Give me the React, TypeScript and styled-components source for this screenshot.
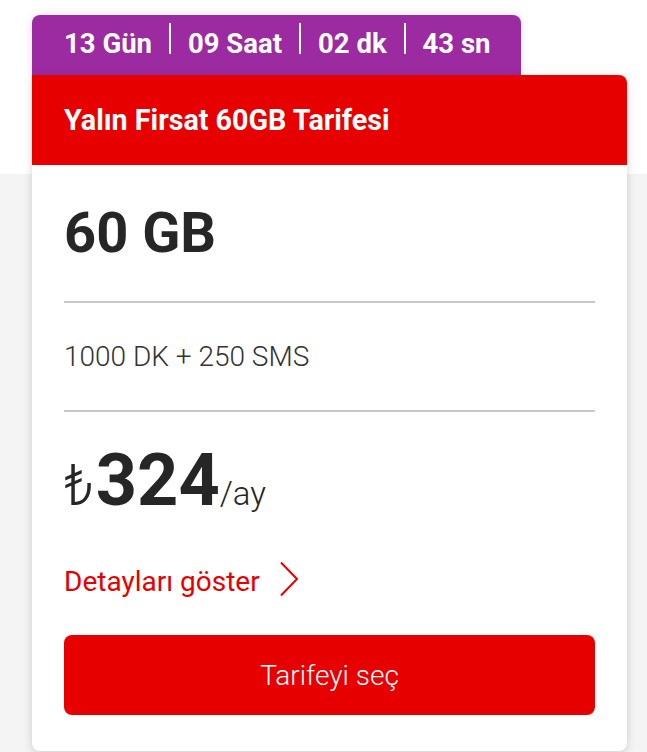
import styled, { createGlobalStyle } from "styled-components";

const GlobalStyle = createGlobalStyle`
  html, body {
    margin: 0;
    padding: 0;
  }
  body {
    font-family: Roboto, "Noto Sans", "Liberation Sans", sans-serif;
    color: #333333;
  }
`;

const Page = styled.main`
  min-height: 752px;
  padding: 15px 20px 0 32px;
  background: linear-gradient(#ffffff 174px, #f4f4f4 174px);
  box-sizing: border-box;
`;

const Offer = styled.section`
  width: 595px;
  display: flex;
  flex-direction: column;
  align-items: flex-start;
`;

const Countdown = styled.div`
  height: 60px;
  box-sizing: border-box;
  padding: 0 13px 21px 13px;
  display: flex;
  align-items: flex-end;
  background: #9c2aa0;
  border-radius: 8px 8px 0 0;
  box-shadow: 0 0 10px rgba(0, 0, 0, 0.12);
  color: #ffffff;
`;

const Segment = styled.span<{ $first?: boolean }>`
  height: 31px;
  display: flex;
  align-items: flex-end;
  padding: 0 17px;
  border-left: 2px solid ${(p) => (p.$first ? "transparent" : "#ffffff")};
  font-size: 27.5px;
  font-weight: 700;
  line-height: 20px;
  white-space: nowrap;
`;

const Card = styled.article`
  width: 100%;
  background: #ffffff;
  border-radius: 0 8px 8px 8px;
  box-shadow: 0 2px 10px rgba(0, 0, 0, 0.16);
  overflow: hidden;
`;

const Header = styled.header`
  height: 90px;
  display: flex;
  align-items: center;
  padding: 0 32px;
  background: #e60000;
  color: #ffffff;
`;

const Title = styled.h2`
  margin: 0;
  font-size: 28.7px;
  font-weight: 700;
  line-height: 1;
`;

const Body = styled.div`
  padding: 40px 32px 36px;
  display: flex;
  flex-direction: column;
`;

const Data = styled.div`
  font-size: 56px;
  font-weight: 700;
  line-height: 1;
  color: #262626;
`;

const Divider = styled.hr<{ $gap: number }>`
  margin: ${(p) => p.$gap}px 0 0;
  border: 0;
  height: 2px;
  background: #c8c8c8;
`;

const Allowance = styled.p`
  margin: 40px 0 0;
  font-size: 28px;
  font-weight: 300;
  line-height: 1;
  color: #333333;
`;

const Price = styled.div`
  margin-top: 33px;
  display: flex;
  align-items: baseline;
  line-height: 1;
  color: #262626;
`;

const Currency = styled.span`
  font-size: 58px;
  font-weight: 300;
`;

const Amount = styled.span`
  font-size: 72px;
  font-weight: 700;
  margin-left: 2px;
`;

const Period = styled.span`
  font-size: 33px;
  font-weight: 300;
`;

const DetailsLink = styled.a`
  margin-top: 50px;
  display: flex;
  align-items: center;
  gap: 19px;
  font-size: 28px;
  line-height: 1;
  color: #e60000;
  text-decoration: none;
  cursor: pointer;

  svg {
    flex: none;
    margin-top: -6px;
  }
`;

const SelectButton = styled.button`
  margin-top: 38px;
  height: 80px;
  width: 100%;
  border: 0;
  border-radius: 8px;
  background: #e60000;
  color: #ffffff;
  font-family: inherit;
  font-size: 28px;
  font-weight: 300;
  cursor: pointer;
`;

const countdown = ["13 Gün", "09 Saat", "02 dk", "43 sn"];

export default function App(): JSX.Element {
  return (
    <Page>
      <GlobalStyle />
      <Offer>
        <Countdown>
          {countdown.map((part, i) => (
            <Segment key={part} $first={i === 0}>
              {part}
            </Segment>
          ))}
        </Countdown>
        <Card>
          <Header>
            <Title>Yalın Firsat 60GB Tarifesi</Title>
          </Header>
          <Body>
            <Data>60 GB</Data>
            <Divider $gap={40} />
            <Allowance>1000 DK + 250 SMS</Allowance>
            <Divider $gap={39} />
            <Price>
              <Currency>₺</Currency>
              <Amount>324</Amount>
              <Period>/ay</Period>
            </Price>
            <DetailsLink>
              Detayları göster
              <svg width="20" height="36" viewBox="0 0 20 36" fill="none">
                <path d="M2 1.5L18 18L2 34.5" stroke="#e60000" strokeWidth="2" />
              </svg>
            </DetailsLink>
            <SelectButton>Tarifeyi seç</SelectButton>
          </Body>
        </Card>
      </Offer>
    </Page>
  );
}
